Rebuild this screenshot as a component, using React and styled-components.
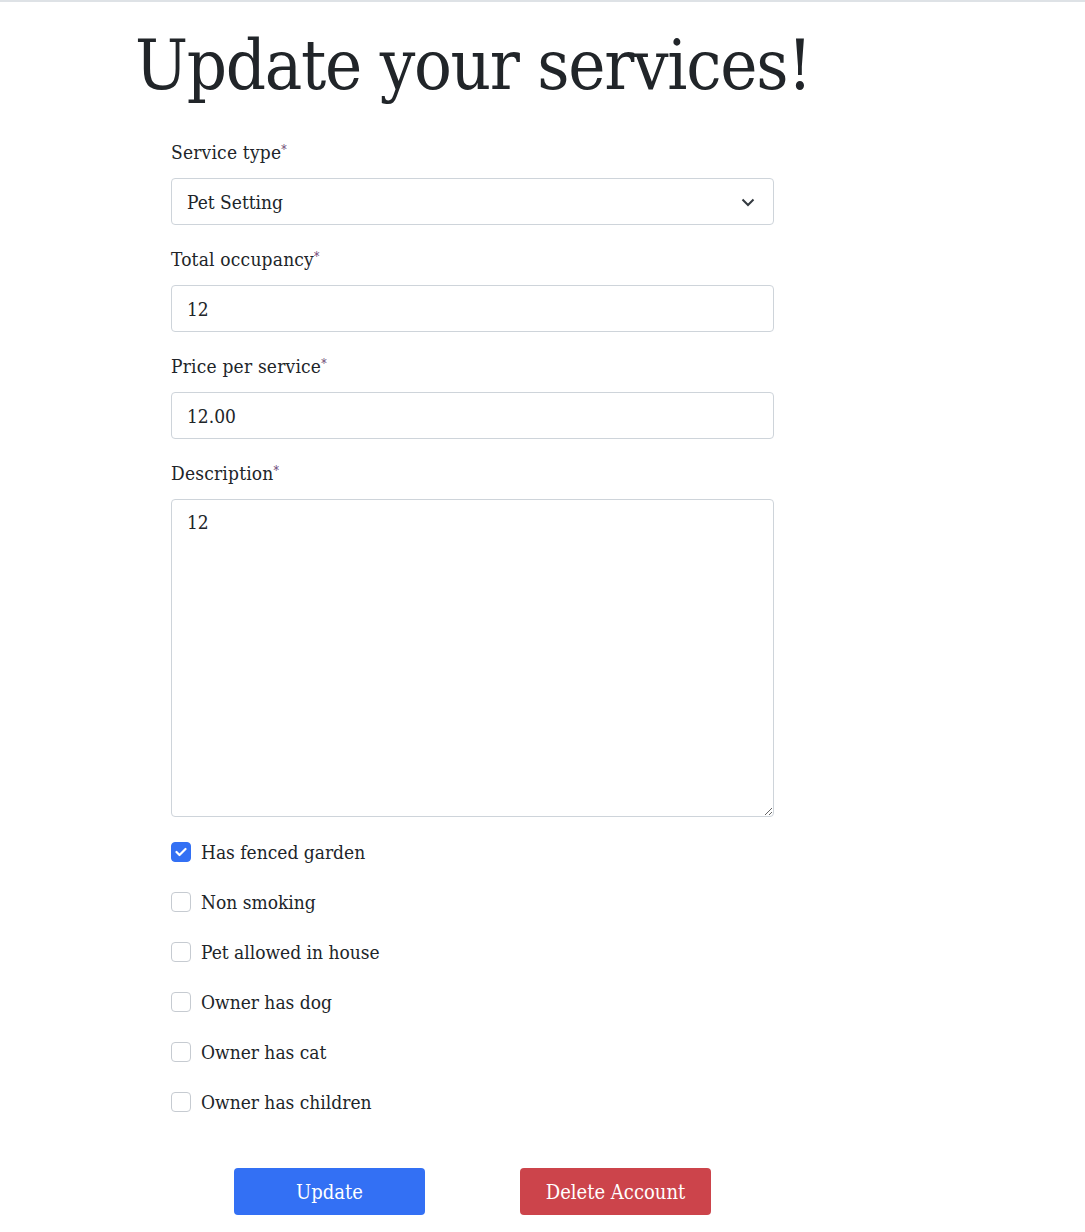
import React from "react";
import styled, { createGlobalStyle } from "styled-components";

const Global = createGlobalStyle`
  html, body { margin: 0; padding: 0; background: #fff; }
  body {
    font-family: "DejaVu Serif", "Liberation Serif", serif;
    color: #212529;
  }
  * { box-sizing: border-box; }
`;

const TopBar = styled.div`
  height: 3px;
  border-top: 2px solid #dee2e6;
`;

const Page = styled.main`
  padding: 22px 0 0 135px;
`;

const Title = styled.h1`
  margin: 0;
  font-family: "DejaVu Serif", serif;
  font-stretch: condensed;
  font-weight: 400;
  font-size: 70px;
  line-height: 80px;
  letter-spacing: -1.3px;
  color: #212529;
`;

const Form = styled.form`
  width: 603px;
  margin: 35px 0 0 36px;
  display: flex;
  flex-direction: column;
`;

const Field = styled.div`
  display: flex;
  flex-direction: column;
  margin-bottom: 22px;
`;

const Label = styled.label`
  font-size: 19px;
  font-stretch: condensed;
  letter-spacing: 0.2px;
  line-height: 24px;
  margin-bottom: 14px;
`;

const Req = styled.sup`
  font-size: 12px;
  color: #6b3f72;
  vertical-align: top;
  position: relative;
  top: -2px;
`;

const controlCss = `
  width: 100%;
  height: 47px;
  border: 1px solid #ced4da;
  border-radius: 4px;
  background: #fff;
  font-family: "DejaVu Serif", serif;
  font-stretch: condensed;
  font-size: 19px;
  color: #212529;
  padding: 0 15px;
  outline: none;
`;

const SelectBox = styled.div`
  ${controlCss}
  display: flex;
  align-items: center;
  justify-content: space-between;
  padding-right: 18px;
`;

const Input = styled.input`
  ${controlCss}
`;

const TextArea = styled.textarea`
  ${controlCss}
  height: 318px;
  padding-top: 10px;
  resize: vertical;
  line-height: 24px;
`;

const Checks = styled.div`
  display: flex;
  flex-direction: column;
  gap: 26px;
  margin-top: 1px;
`;

const CheckRow = styled.label`
  display: flex;
  align-items: center;
  gap: 10px;
  height: 24px;
  font-size: 19px;
  font-stretch: condensed;
`;

const Box = styled.span`
  width: 20px;
  height: 20px;
  border-radius: 4px;
  border: 1px solid ${(p) => (p.$checked ? "#3370f4" : "#c6cbd1")};
  background: ${(p) => (p.$checked ? "#3370f4" : "#fff")};
  display: flex;
  align-items: center;
  justify-content: center;
  flex: none;
`;

const Actions = styled.div`
  display: flex;
  gap: 95px;
  margin: 54px 0 0 63px;
`;

const Button = styled.button`
  width: 191px;
  height: 47px;
  border: none;
  border-radius: 4px;
  background: ${(p) => p.$bg};
  color: #fff;
  font-family: "DejaVu Serif", serif;
  font-stretch: condensed;
  font-size: 20px;
`;

const checks = [
  ["Has fenced garden", true],
  ["Non smoking", false],
  ["Pet allowed in house", false],
  ["Owner has dog", false],
  ["Owner has cat", false],
  ["Owner has children", false],
];

export default function App() {
  return (
    <>
      <Global />
      <TopBar />
      <Page>
        <Title>Update your services!</Title>
        <Form onSubmit={(e) => e.preventDefault()}>
          <Field>
            <Label>Service type<Req>*</Req></Label>
            <SelectBox>
              <span>Pet Setting</span>
              <svg width="14" height="10" viewBox="0 0 14 10">
                <path d="M1.5 2.5 L7 8 L12.5 2.5" fill="none" stroke="#343a40" strokeWidth="2" />
              </svg>
            </SelectBox>
          </Field>
          <Field>
            <Label>Total occupancy<Req>*</Req></Label>
            <Input defaultValue="12" />
          </Field>
          <Field>
            <Label>Price per service<Req>*</Req></Label>
            <Input defaultValue="12.00" />
          </Field>
          <Field>
            <Label>Description<Req>*</Req></Label>
            <TextArea defaultValue="12" />
          </Field>
          <Checks>
            {checks.map(([t, c]) => (
              <CheckRow key={t}>
                <Box $checked={c}>
                  {c && (
                    <svg width="12" height="10" viewBox="0 0 12 10">
                      <path d="M1.5 5 L4.5 8 L10.5 2" fill="none" stroke="#fff" strokeWidth="2.2" strokeLinecap="round" strokeLinejoin="round" />
                    </svg>
                  )}
                </Box>
                {t}
              </CheckRow>
            ))}
          </Checks>
          <Actions>
            <Button type="button" $bg="#3370f4">Update</Button>
            <Button type="button" $bg="#cc444b">Delete Account</Button>
          </Actions>
        </Form>
      </Page>
    </>
  );
}
